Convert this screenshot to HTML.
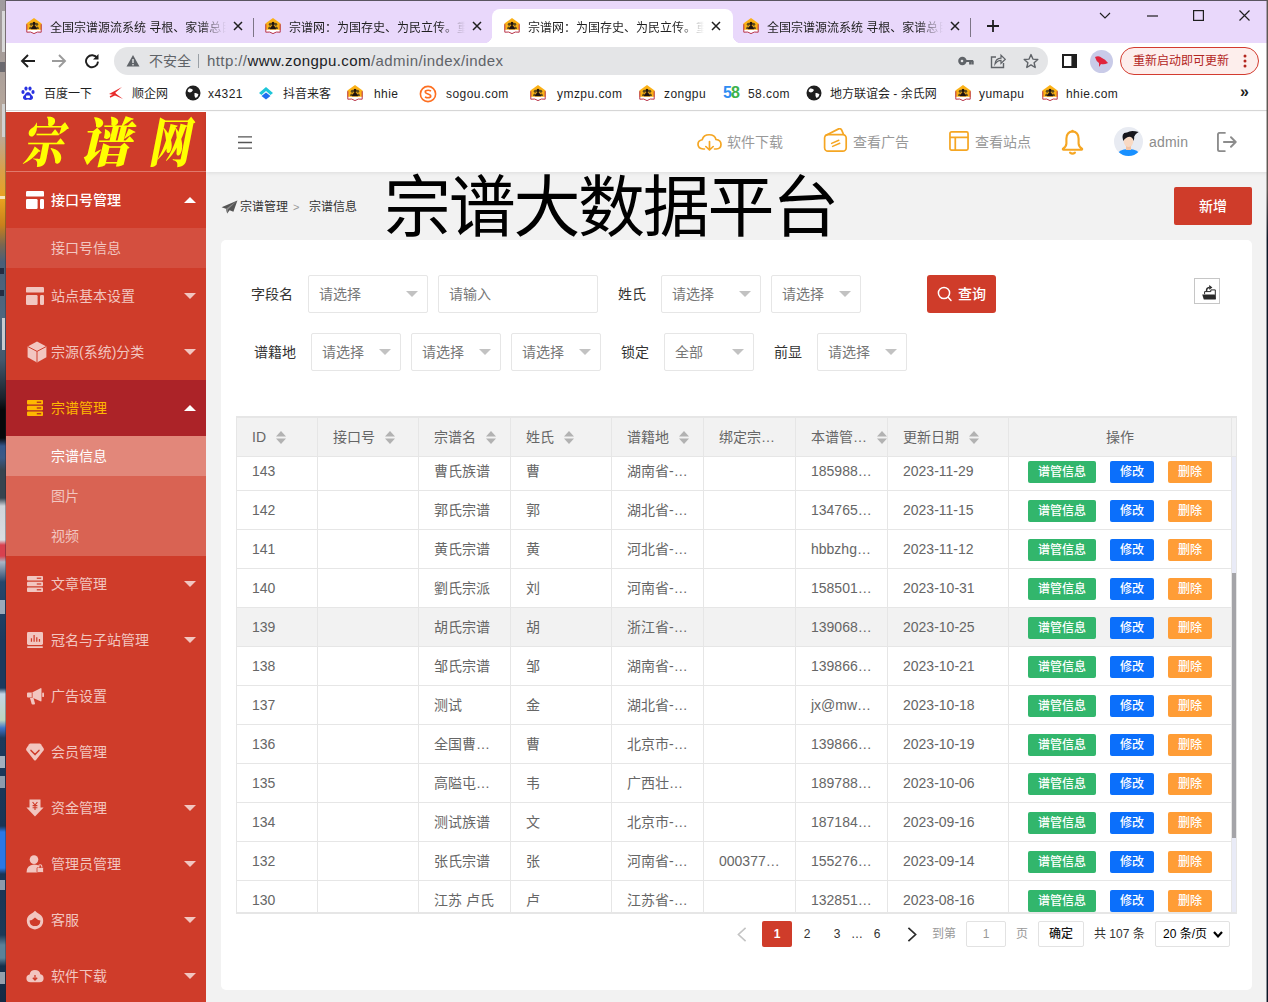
<!DOCTYPE html>
<html lang="zh-CN">
<head>
<meta charset="utf-8">
<title>宗谱网：为国存史、为民立传。</title>
<style>
*{box-sizing:border-box;margin:0;padding:0}
html,body{width:1268px;height:1002px;overflow:hidden;background:#fff}
body{position:relative;font-family:"Liberation Sans","Noto Sans CJK SC",sans-serif;font-size:14px;color:#666;-webkit-font-smoothing:antialiased}
.abs{position:absolute}
svg{display:block}
/* desktop strip */
#desk{position:absolute;left:0;top:0;width:6px;height:1002px;overflow:hidden;background:linear-gradient(180deg,#9f9b9e 0,#a59c99 50px,#b3a59b 100px,#bfa78f 140px,#d9a04a 170px,#e8a11f 200px,#c9801c 225px,#7a6650 245px,#4a5f78 262px,#50687f 320px,#44586c 360px,#1a222c 398px,#06080a 410px,#06080a 438px,#34568a 446px,#3a5a86 458px,#37444f 470px,#37444f 498px,#cfd4d9 506px,#d9dde2 540px,#d8404e 545px,#d8404e 556px,#aab6c4 562px,#27476c 582px,#1b3a5e 640px,#1b3a5e 688px,#c4d6e6 694px,#bcd6c0 720px,#3f74c8 728px,#1c3a5c 738px,#1a3556 826px,#2b78e6 832px,#2b78e6 868px,#1a3556 874px,#1d3a58 935px,#5b8298 945px,#5b8298 958px,#16304c 966px,#142a44 1002px)}
#desk i{position:absolute;display:block}
/* chrome */
#tabbar{z-index:2;position:absolute;left:6px;top:0;width:1262px;height:43px;background:#e9d8fb;border-top:1px solid #5a5560}
.tab{position:absolute;top:9px;height:34px;font-size:12px;color:#1f1f1f;white-space:nowrap}
.tab .ttl{position:absolute;top:10px;left:24px;width:178px;overflow:hidden;line-height:16px;height:16px;-webkit-mask-image:linear-gradient(90deg,#000 150px,transparent 176px);mask-image:linear-gradient(90deg,#000 150px,transparent 176px)}
.tab .fav{position:absolute;left:0;top:8px}
.tab .x{position:absolute;left:207px;top:11px}
.tsep{position:absolute;top:17px;width:1px;height:19px;background:#7d7586}
#tabact{position:absolute;left:486px;top:8px;width:241px;height:34px;background:#fff;border-radius:8px 8px 0 0}
#addr{position:absolute;left:6px;top:42px;width:1262px;height:36px;background:#fff}
#pill{position:absolute;left:108px;top:5px;width:934px;height:28px;border-radius:14px;background:#e4e5e7}
#bm{position:absolute;left:6px;top:78px;width:1262px;height:33px;background:#fff;border-bottom:1px solid #d8d8d8;font-size:12px;color:#1f1f1f}
#bm .b{position:absolute;top:8px;letter-spacing:.45px;line-height:16px;white-space:nowrap}
#bm .i{position:absolute;top:7px}
#bm .c{letter-spacing:0}
#tabact:before,#tabact:after{content:"";position:absolute;bottom:0;width:8px;height:8px;background:radial-gradient(circle at 0 0,transparent 8px,#fff 8.5px)}
#tabact:before{left:-8px}
#tabact:after{right:-8px;background:radial-gradient(circle at 100% 0,transparent 8px,#fff 8.5px)}
/* sidebar */
#side{position:absolute;left:6px;top:112px;width:200px;height:890px;background:#cf3c2a;overflow:hidden}
#logo{position:absolute;left:0;top:0;width:200px;height:60px;border-bottom:1px solid #e0796c;color:#ff0;font-family:"Liberation Serif","Noto Serif CJK SC",serif;font-weight:900;font-size:53px;line-height:56px;white-space:nowrap;font-style:italic}
#logo span{position:absolute;top:4px;display:block;transform-origin:0 50%}
.mi{position:absolute;left:0;width:200px;height:56px;color:#f2c6c0;font-size:14px;line-height:56px}
.mi .t{position:absolute;left:45px;top:0;white-space:nowrap}
.mi .ic{position:absolute;left:20px;top:19px}
.mi .ar{position:absolute;left:178px;top:25px;width:0;height:0;border:6px solid transparent;border-top-color:#f2c6c0;border-bottom-width:0}
.mi.open .ar{border-top-width:0;border-bottom:6px solid #fff;border-top-color:transparent}
.mi.open{color:#fff}
.mi.cur{background:#ac2328;color:#ffb800}
.sub{position:absolute;left:0;width:200px;height:40px;line-height:40px;color:#f2c6c0;font-size:14px;padding-left:45px;white-space:nowrap}
/* header */
#hdr{z-index:3;box-shadow:0 1px 4px rgba(0,0,0,.09);position:absolute;left:206px;top:112px;width:1062px;height:60px;background:#fff}
#hdr .ht{position:absolute;top:21px;font-size:14px;line-height:18px;color:#999;white-space:nowrap}
#main{position:absolute;left:206px;top:172px;width:1062px;height:830px;background:#f2f2f2}
/* main */
#main .bc{position:absolute;top:27px;font-size:12px;line-height:16px;color:#333;white-space:nowrap}
#bigt{position:absolute;left:178px;top:-12px;font-size:67px;line-height:96px;color:#000;white-space:nowrap;letter-spacing:-2.3px}
#add{font-weight:500;position:absolute;left:968px;top:15px;width:78px;height:38px;background:#cf3c2a;color:#fff;font-size:14px;line-height:38px;text-align:center;border-radius:2px}
#card{position:absolute;left:15px;top:68px;width:1031px;height:750px;background:#fff;border-radius:5px}
.lb{position:absolute;font-size:14px;line-height:38px;color:#333;white-space:nowrap}
.sel,.inp{position:absolute;height:38px;border:1px solid #e6e6e6;border-radius:2px;background:#fff;font-size:14px;line-height:36px;color:#777;padding-left:10px;white-space:nowrap}
.sel i{position:absolute;right:9px;top:15px;width:0;height:0;border:6px solid transparent;border-top-color:#c2c2c2;border-bottom-width:0}
#qry{font-weight:500;position:absolute;left:706px;top:35px;width:69px;height:38px;background:#cf3c2a;border-radius:3px;color:#fff;font-size:14px;line-height:38px}
#exp{position:absolute;left:973px;top:38px;width:26px;height:26px;border:1px solid #c6c6c6;background:#fff}
/* table */
#tbl{position:absolute;left:15px;top:176px;width:1001px;height:498px;border:1px solid #e6e6e6;border-top-width:2px;border-bottom-width:2px;overflow:hidden;background:#fff}
#thd{position:absolute;left:0;top:0;width:999px;height:39px;background:#f2f2f2;border-bottom:1px solid #e6e6e6;z-index:2}
.th{position:absolute;top:0;height:39px;line-height:39px;font-size:14px;color:#666;padding-left:15px;white-space:nowrap;border-right:1px solid #e6e6e6}
.th .so{position:absolute;top:13px}
.tr{position:absolute;left:0;width:995px;height:39px;border-bottom:1px solid #e6e6e6}
.td{position:absolute;top:0;height:38px;line-height:38px;font-size:14px;color:#666;padding-left:15px;white-space:nowrap;overflow:hidden;border-right:1px solid #e6e6e6}
.bt{position:absolute;top:9px;height:22px;line-height:22px;font-size:12px;font-weight:500;color:#fff;text-align:center;border-radius:2px}
.g{background:#32b66c}.bl{background:#0b6ffb}.o{background:#ff9d36}
#sb{position:absolute;left:995px;top:39px;width:4px;height:456px;background:#e9ebf7}
#sbt{position:absolute;left:995px;top:155px;width:4px;height:265px;background:#a4a4a8}
/* pager */
.pg{position:absolute;top:681px;height:26px;line-height:26px;font-size:12px;color:#333;white-space:nowrap}
.pgb{border:1px solid #e2e2e2;border-radius:2px;background:#fff}
</style>
</head>
<body>
<div id="desk"><i style="left:2px;top:11px;width:3px;height:41px;background:#d9d9d9"></i><i style="left:2px;top:104px;width:3px;height:33px;background:#d2d2d2"></i><i style="left:5px;top:0;width:1px;height:1002px;background:rgba(40,30,40,.35)"></i><i style="left:0;top:62px;width:5px;height:10px;background:rgba(30,40,60,.45)"></i><i style="left:0;top:196px;width:5px;height:3px;background:rgba(255,255,255,.7)"></i><i style="left:0;top:268px;width:4px;height:6px;background:rgba(10,10,30,.6)"></i><i style="left:0;top:290px;width:4px;height:6px;background:rgba(10,10,30,.6)"></i><i style="left:2px;top:318px;width:3px;height:32px;background:#c9ccd0"></i><i style="left:0;top:600px;width:5px;height:14px;background:rgba(255,255,255,.55)"></i><i style="left:0;top:756px;width:5px;height:12px;background:rgba(255,255,255,.6)"></i><i style="left:0;top:776px;width:5px;height:12px;background:rgba(255,255,255,.5)"></i><i style="left:0;top:880px;width:5px;height:10px;background:rgba(255,255,255,.5)"></i><i style="left:0;top:972px;width:5px;height:12px;background:rgba(255,255,255,.55)"></i></div>
<div id="tabbar">
<div id="tabact"></div>
<div class="tab" style="left:20px;width:230px"><span class="fav"><svg width="16" height="16" viewBox="0 0 16 16"><path d="M8 0L15.6 5.6V12H.4V5.6Z" fill="#fbb116"/><path d="M.9 11.7H15.1V14Q11 13 8 15.3Q5 13 .9 14Z" fill="#fff"/><path d="M.8 6.2V14.2Q5 13.2 8 15.6Q11 13.2 15.2 14.2V6.2" fill="none" stroke="#b9364a" stroke-width="1"/><circle cx="5.3" cy="6.3" r="1.5" fill="#5c4c1c"/><circle cx="10.7" cy="6.3" r="1.5" fill="#5c4c1c"/><path d="M3 11Q3.2 8.6 5 8.6L6 11ZM13 11Q12.8 8.6 11 8.6L10 11Z" fill="#5c4c1c"/><circle cx="8" cy="5.3" r="1.5" fill="#1c1210"/><path d="M4.9 11.2Q5.2 8.4 7.2 7.8V6H8.8V7.8Q10.8 8.4 11.1 11.2Z" fill="#1c1210"/></svg></span><span class="ttl">全国宗谱源流系统 寻根、家谱总目</span><span class="x"><svg width="10" height="10" viewBox="0 0 10 10"><path d="M1 1L9 9M9 1L1 9" stroke="#1f1f1f" stroke-width="1.5" fill="none"/></svg></span></div>
<div class="tsep" style="left:247px"></div>
<div class="tab" style="left:259px;width:230px"><span class="fav"><svg width="16" height="16" viewBox="0 0 16 16"><path d="M8 0L15.6 5.6V12H.4V5.6Z" fill="#fbb116"/><path d="M.9 11.7H15.1V14Q11 13 8 15.3Q5 13 .9 14Z" fill="#fff"/><path d="M.8 6.2V14.2Q5 13.2 8 15.6Q11 13.2 15.2 14.2V6.2" fill="none" stroke="#b9364a" stroke-width="1"/><circle cx="5.3" cy="6.3" r="1.5" fill="#5c4c1c"/><circle cx="10.7" cy="6.3" r="1.5" fill="#5c4c1c"/><path d="M3 11Q3.2 8.6 5 8.6L6 11ZM13 11Q12.8 8.6 11 8.6L10 11Z" fill="#5c4c1c"/><circle cx="8" cy="5.3" r="1.5" fill="#1c1210"/><path d="M4.9 11.2Q5.2 8.4 7.2 7.8V6H8.8V7.8Q10.8 8.4 11.1 11.2Z" fill="#1c1210"/></svg></span><span class="ttl">宗谱网：为国存史、为民立传。重</span><span class="x"><svg width="10" height="10" viewBox="0 0 10 10"><path d="M1 1L9 9M9 1L1 9" stroke="#1f1f1f" stroke-width="1.5" fill="none"/></svg></span></div>
<div class="tab" style="left:498px;width:230px"><span class="fav"><svg width="16" height="16" viewBox="0 0 16 16"><path d="M8 0L15.6 5.6V12H.4V5.6Z" fill="#fbb116"/><path d="M.9 11.7H15.1V14Q11 13 8 15.3Q5 13 .9 14Z" fill="#fff"/><path d="M.8 6.2V14.2Q5 13.2 8 15.6Q11 13.2 15.2 14.2V6.2" fill="none" stroke="#b9364a" stroke-width="1"/><circle cx="5.3" cy="6.3" r="1.5" fill="#5c4c1c"/><circle cx="10.7" cy="6.3" r="1.5" fill="#5c4c1c"/><path d="M3 11Q3.2 8.6 5 8.6L6 11ZM13 11Q12.8 8.6 11 8.6L10 11Z" fill="#5c4c1c"/><circle cx="8" cy="5.3" r="1.5" fill="#1c1210"/><path d="M4.9 11.2Q5.2 8.4 7.2 7.8V6H8.8V7.8Q10.8 8.4 11.1 11.2Z" fill="#1c1210"/></svg></span><span class="ttl">宗谱网：为国存史、为民立传。重</span><span class="x"><svg width="10" height="10" viewBox="0 0 10 10"><path d="M1 1L9 9M9 1L1 9" stroke="#1f1f1f" stroke-width="1.5" fill="none"/></svg></span></div>
<div class="tab" style="left:737px;width:230px"><span class="fav"><svg width="16" height="16" viewBox="0 0 16 16"><path d="M8 0L15.6 5.6V12H.4V5.6Z" fill="#fbb116"/><path d="M.9 11.7H15.1V14Q11 13 8 15.3Q5 13 .9 14Z" fill="#fff"/><path d="M.8 6.2V14.2Q5 13.2 8 15.6Q11 13.2 15.2 14.2V6.2" fill="none" stroke="#b9364a" stroke-width="1"/><circle cx="5.3" cy="6.3" r="1.5" fill="#5c4c1c"/><circle cx="10.7" cy="6.3" r="1.5" fill="#5c4c1c"/><path d="M3 11Q3.2 8.6 5 8.6L6 11ZM13 11Q12.8 8.6 11 8.6L10 11Z" fill="#5c4c1c"/><circle cx="8" cy="5.3" r="1.5" fill="#1c1210"/><path d="M4.9 11.2Q5.2 8.4 7.2 7.8V6H8.8V7.8Q10.8 8.4 11.1 11.2Z" fill="#1c1210"/></svg></span><span class="ttl">全国宗谱源流系统 寻根、家谱总目</span><span class="x"><svg width="10" height="10" viewBox="0 0 10 10"><path d="M1 1L9 9M9 1L1 9" stroke="#1f1f1f" stroke-width="1.5" fill="none"/></svg></span></div>
<div class="tsep" style="left:964px"></div>
<svg class="abs" style="left:980px;top:18px" width="14" height="14" viewBox="0 0 14 14"><path d="M7 1V13M1 7H13" stroke="#1f1f1f" stroke-width="1.8" fill="none"/></svg>
<svg class="abs" style="left:1093px;top:11px" width="12" height="8" viewBox="0 0 12 8"><path d="M1 1L6 6L11 1" stroke="#1f1f1f" stroke-width="1.1" fill="none"/></svg>
<svg class="abs" style="left:1141px;top:14px" width="11" height="2" viewBox="0 0 11 2"><path d="M0 1H11" stroke="#1f1f1f" stroke-width="1.2"/></svg>
<svg class="abs" style="left:1187px;top:9px" width="11" height="11" viewBox="0 0 11 11"><rect x=".6" y=".6" width="9.8" height="9.8" stroke="#1f1f1f" stroke-width="1.2" fill="none"/></svg>
<svg class="abs" style="left:1233px;top:9px" width="11" height="11" viewBox="0 0 11 11"><path d="M.5 .5L10.5 10.5M10.5 .5L.5 10.5" stroke="#1f1f1f" stroke-width="1.2" fill="none"/></svg>
</div>
<div id="addr">
<svg class="abs" style="left:14px;top:11px" width="16" height="16" viewBox="0 0 16 16"><path d="M15 8H2.5M8 2L2 8L8 14" stroke="#1f1f1f" stroke-width="1.9" fill="none"/></svg>
<svg class="abs" style="left:45px;top:11px" width="16" height="16" viewBox="0 0 16 16"><path d="M1 8H13.5M8 2L14 8L8 14" stroke="#9b9b9b" stroke-width="1.9" fill="none"/></svg>
<svg class="abs" style="left:78px;top:11px" width="16" height="16" viewBox="0 0 16 16"><path d="M13.2 5.2A6 6 0 1 0 14 8.6" stroke="#1f1f1f" stroke-width="1.9" fill="none"/><path d="M14.5 1V6.5H9Z" fill="#1f1f1f"/></svg>
<div id="pill">
<svg class="abs" style="left:12px;top:7px" width="14" height="14" viewBox="0 0 14 14"><path d="M7 1L13.5 12.5H.5Z" fill="#5f6368"/><rect x="6.3" y="5" width="1.4" height="4" fill="#e4e5e7"/><rect x="6.3" y="10" width="1.4" height="1.4" fill="#e4e5e7"/></svg>
<span class="abs" style="left:35px;top:5px;font-size:14px;line-height:18px;color:#5f6368;white-space:nowrap">不安全</span>
<span class="abs" style="left:84px;top:7px;width:1px;height:14px;background:#9aa0a6"></span>
<span class="abs" style="left:93px;top:5px;font-size:15px;line-height:18px;color:#5f6368;white-space:nowrap;letter-spacing:.42px">http://<span style="color:#202124">www.zongpu.com</span>/admin/index/index</span>
<svg class="abs" style="left:844px;top:8px" width="16" height="12" viewBox="0 0 16 12"><circle cx="4.4" cy="6" r="4.2" fill="#5f6368"/><circle cx="4" cy="6" r="1.3" fill="#e4e5e7"/><path d="M8 6H15.2M12.2 6V9.6M14.6 6V9.6" stroke="#5f6368" stroke-width="2.2" fill="none"/></svg>
<svg class="abs" style="left:876px;top:6px" width="16" height="16" viewBox="0 0 16 16"><path d="M6 4H1.5V14.5H13.5V10" stroke="#5f6368" stroke-width="1.4" fill="none"/><path d="M5 11Q5.5 5.5 11 5.2V2.2L15.3 6.3L11 10.4V7.4Q7.5 7.4 5 11Z" stroke="#5f6368" stroke-width="1.2" fill="none"/></svg>
<svg class="abs" style="left:909px;top:6px" width="16" height="16" viewBox="0 0 16 16"><path d="M8 1.6L9.9 6.1L14.8 6.5L11.1 9.7L12.2 14.5L8 11.9L3.8 14.5L4.9 9.7L1.2 6.5L6.1 6.1Z" stroke="#5f6368" stroke-width="1.4" fill="none" stroke-linejoin="round"/></svg>
</div>
<svg class="abs" style="left:1056px;top:12px" width="15" height="14" viewBox="0 0 15 14"><rect x="1" y="1" width="13" height="12" stroke="#1f1f1f" stroke-width="2" fill="none"/><rect x="9.4" y="1" width="4.6" height="12" fill="#1f1f1f"/></svg>
<div class="abs" style="left:1084px;top:8px;width:23px;height:23px;border-radius:50%;background:#c9cbe8"></div>
<svg class="abs" style="left:1088px;top:13px" width="15" height="13" viewBox="0 0 15 13"><path d="M1 2Q5 0 8 3Q11 4 14 8Q10 10 7 9L5 12L5 8Q2 6 1 2Z" fill="#e0243c"/></svg>
<div class="abs" style="left:1114px;top:5px;width:139px;height:28px;border-radius:14px;background:#fdeeec;border:1px solid #d33b2f"></div>
<span class="abs" style="left:1127px;top:10px;font-size:12px;line-height:18px;color:#b3261e;white-space:nowrap">重新启动即可更新</span>
<svg class="abs" style="left:1237px;top:12px" width="4" height="14" viewBox="0 0 4 14"><circle cx="2" cy="2" r="1.5" fill="#b3261e"/><circle cx="2" cy="7" r="1.5" fill="#b3261e"/><circle cx="2" cy="12" r="1.5" fill="#b3261e"/></svg>
</div>
<div id="bm">
<span class="i" style="left:14px"><svg width="16" height="16" viewBox="0 0 16 16"><ellipse cx="3" cy="7" rx="1.6" ry="2.1" fill="#2932e1"/><ellipse cx="6" cy="3.6" rx="1.6" ry="2.1" fill="#2932e1"/><ellipse cx="10" cy="3.6" rx="1.6" ry="2.1" fill="#2932e1"/><ellipse cx="13" cy="7" rx="1.6" ry="2.1" fill="#2932e1"/><path d="M8 7Q10 7 11.5 10Q14 12 12.5 14Q11 15.5 8 14.5Q5 15.5 3.5 14Q2 12 4.5 10Q6 7 8 7Z" fill="#2932e1"/><rect x="6" y="10.5" width="4" height="2.6" rx=".8" fill="#fff"/></svg></span><span class="b c" style="left:38px">百度一下</span>
<span class="i" style="left:102px"><svg width="16" height="16" viewBox="0 0 16 16"><path d="M1 9L14 2L7 8L15 14L6 10Z" fill="#e82a2a"/><path d="M2 12L8 9" stroke="#e82a2a" stroke-width="1.4"/></svg></span><span class="b c" style="left:126px">顺企网</span>
<span class="i" style="left:179px"><svg width="16" height="16" viewBox="0 0 16 16"><circle cx="8" cy="8" r="7.5" fill="#1f1f1f"/><path d="M4 3.5Q7 3 8 5Q7 7 5 7.5Q3 7 2.5 6Q3 4.5 4 3.5ZM9.5 8Q12 7.5 13.5 9.5Q13 12 10.5 13Q9 11 9.5 8Z" fill="#fff"/></svg></span><span class="b" style="left:202px">x4321</span>
<span class="i" style="left:252px"><svg width="16" height="16" viewBox="0 0 16 16"><path d="M1 8L8 2L15 8L12.5 10L8 6L3.5 10Z" fill="#1ec6d9"/><path d="M3.5 11L8 7.5L12.5 11L8 14.5Z" fill="#1f6ff0"/></svg></span><span class="b c" style="left:277px">抖音来客</span>
<span class="i" style="left:341px"><svg width="16" height="16" viewBox="0 0 16 16"><path d="M8 0L15.6 5.6V12H.4V5.6Z" fill="#fbb116"/><path d="M.9 11.7H15.1V14Q11 13 8 15.3Q5 13 .9 14Z" fill="#fff"/><path d="M.8 6.2V14.2Q5 13.2 8 15.6Q11 13.2 15.2 14.2V6.2" fill="none" stroke="#b9364a" stroke-width="1"/><circle cx="5.3" cy="6.3" r="1.5" fill="#5c4c1c"/><circle cx="10.7" cy="6.3" r="1.5" fill="#5c4c1c"/><path d="M3 11Q3.2 8.6 5 8.6L6 11ZM13 11Q12.8 8.6 11 8.6L10 11Z" fill="#5c4c1c"/><circle cx="8" cy="5.3" r="1.5" fill="#1c1210"/><path d="M4.9 11.2Q5.2 8.4 7.2 7.8V6H8.8V7.8Q10.8 8.4 11.1 11.2Z" fill="#1c1210"/></svg></span><span class="b" style="left:368px">hhie</span>
<span class="i" style="left:413px"><svg width="18" height="18" viewBox="0 0 18 18"><circle cx="9" cy="9" r="7.6" fill="#fff" stroke="#fd6f21" stroke-width="1.6"/><path d="M12 6Q9 4.5 6.5 6Q5.5 8 9 9Q12.5 10 11.5 12Q9 13.5 6 12" stroke="#fd6f21" stroke-width="1.7" fill="none"/></svg></span><span class="b" style="left:440px">sogou.com</span>
<span class="i" style="left:524px"><svg width="16" height="16" viewBox="0 0 16 16"><path d="M8 0L15.6 5.6V12H.4V5.6Z" fill="#fbb116"/><path d="M.9 11.7H15.1V14Q11 13 8 15.3Q5 13 .9 14Z" fill="#fff"/><path d="M.8 6.2V14.2Q5 13.2 8 15.6Q11 13.2 15.2 14.2V6.2" fill="none" stroke="#b9364a" stroke-width="1"/><circle cx="5.3" cy="6.3" r="1.5" fill="#5c4c1c"/><circle cx="10.7" cy="6.3" r="1.5" fill="#5c4c1c"/><path d="M3 11Q3.2 8.6 5 8.6L6 11ZM13 11Q12.8 8.6 11 8.6L10 11Z" fill="#5c4c1c"/><circle cx="8" cy="5.3" r="1.5" fill="#1c1210"/><path d="M4.9 11.2Q5.2 8.4 7.2 7.8V6H8.8V7.8Q10.8 8.4 11.1 11.2Z" fill="#1c1210"/></svg></span><span class="b" style="left:551px">ymzpu.com</span>
<span class="i" style="left:633px"><svg width="16" height="16" viewBox="0 0 16 16"><path d="M8 0L15.6 5.6V12H.4V5.6Z" fill="#fbb116"/><path d="M.9 11.7H15.1V14Q11 13 8 15.3Q5 13 .9 14Z" fill="#fff"/><path d="M.8 6.2V14.2Q5 13.2 8 15.6Q11 13.2 15.2 14.2V6.2" fill="none" stroke="#b9364a" stroke-width="1"/><circle cx="5.3" cy="6.3" r="1.5" fill="#5c4c1c"/><circle cx="10.7" cy="6.3" r="1.5" fill="#5c4c1c"/><path d="M3 11Q3.2 8.6 5 8.6L6 11ZM13 11Q12.8 8.6 11 8.6L10 11Z" fill="#5c4c1c"/><circle cx="8" cy="5.3" r="1.5" fill="#1c1210"/><path d="M4.9 11.2Q5.2 8.4 7.2 7.8V6H8.8V7.8Q10.8 8.4 11.1 11.2Z" fill="#1c1210"/></svg></span><span class="b" style="left:658px">zongpu</span>
<span class="i" style="left:717px"><span style="font-weight:bold;font-size:16px;letter-spacing:-1px;line-height:16px"><span style="color:#2f8df2">5</span><span style="color:#3cb34a">8</span></span></span><span class="b" style="left:742px">58.com</span>
<span class="i" style="left:800px"><svg width="16" height="16" viewBox="0 0 16 16"><circle cx="8" cy="8" r="7.5" fill="#1f1f1f"/><path d="M4 3.5Q7 3 8 5Q7 7 5 7.5Q3 7 2.5 6Q3 4.5 4 3.5ZM9.5 8Q12 7.5 13.5 9.5Q13 12 10.5 13Q9 11 9.5 8Z" fill="#fff"/></svg></span><span class="b c" style="left:824px">地方联谊会 - 余氏网</span>
<span class="i" style="left:949px"><svg width="16" height="16" viewBox="0 0 16 16"><path d="M8 0L15.6 5.6V12H.4V5.6Z" fill="#fbb116"/><path d="M.9 11.7H15.1V14Q11 13 8 15.3Q5 13 .9 14Z" fill="#fff"/><path d="M.8 6.2V14.2Q5 13.2 8 15.6Q11 13.2 15.2 14.2V6.2" fill="none" stroke="#b9364a" stroke-width="1"/><circle cx="5.3" cy="6.3" r="1.5" fill="#5c4c1c"/><circle cx="10.7" cy="6.3" r="1.5" fill="#5c4c1c"/><path d="M3 11Q3.2 8.6 5 8.6L6 11ZM13 11Q12.8 8.6 11 8.6L10 11Z" fill="#5c4c1c"/><circle cx="8" cy="5.3" r="1.5" fill="#1c1210"/><path d="M4.9 11.2Q5.2 8.4 7.2 7.8V6H8.8V7.8Q10.8 8.4 11.1 11.2Z" fill="#1c1210"/></svg></span><span class="b" style="left:973px">yumapu</span>
<span class="i" style="left:1036px"><svg width="16" height="16" viewBox="0 0 16 16"><path d="M8 0L15.6 5.6V12H.4V5.6Z" fill="#fbb116"/><path d="M.9 11.7H15.1V14Q11 13 8 15.3Q5 13 .9 14Z" fill="#fff"/><path d="M.8 6.2V14.2Q5 13.2 8 15.6Q11 13.2 15.2 14.2V6.2" fill="none" stroke="#b9364a" stroke-width="1"/><circle cx="5.3" cy="6.3" r="1.5" fill="#5c4c1c"/><circle cx="10.7" cy="6.3" r="1.5" fill="#5c4c1c"/><path d="M3 11Q3.2 8.6 5 8.6L6 11ZM13 11Q12.8 8.6 11 8.6L10 11Z" fill="#5c4c1c"/><circle cx="8" cy="5.3" r="1.5" fill="#1c1210"/><path d="M4.9 11.2Q5.2 8.4 7.2 7.8V6H8.8V7.8Q10.8 8.4 11.1 11.2Z" fill="#1c1210"/></svg></span><span class="b" style="left:1060px">hhie.com</span>
<span class="b" style="left:1234px;font-size:16px;top:6px;font-weight:bold;letter-spacing:0">»</span>
</div>
<div id="side">
<div id="logo"><span style="left:16px;transform:scaleX(.78)">宗</span><span style="left:73px;transform:scaleX(.97)">谱</span><span style="left:142px;transform:scaleX(.78)">网</span></div>
<div class="mi open" style="top:60px"><span class="ic"><svg width="18" height="18" viewBox="0 0 18 18"><rect x="0" y="0" width="18" height="5.6" rx="1.2" fill="#fff"/><rect x="0" y="8" width="11.6" height="10" rx="1.2" fill="#fff"/><rect x="14" y="8" width="4" height="10" rx="1.2" fill="#fff"/></svg></span><span class="t"><span style="font-weight:500">接口号管理</span></span><span class="ar"></span></div>
<div class="sub" style="top:116px;background:#d44f3f;color:#f2c6c0">接口号信息</div>
<div class="mi " style="top:156px"><span class="ic"><svg width="18" height="18" viewBox="0 0 18 18"><rect x="0" y="0" width="18" height="5.6" rx="1.2" fill="#f2c6c0"/><rect x="0" y="8" width="11.6" height="10" rx="1.2" fill="#f2c6c0"/><rect x="14" y="8" width="4" height="10" rx="1.2" fill="#f2c6c0"/></svg></span><span class="t">站点基本设置</span><span class="ar"></span></div>
<div class="mi " style="top:212px"><span class="ic"><svg width="20" height="22" viewBox="0 0 20 22" style="margin:-2px 0 0 1px"><path d="M10 .6L19.4 5.4V16.2L10 21.4L.6 16.2V5.4Z" fill="#f2c6c0"/><path d="M.9 5.6L10 10.4L19.1 5.6M10 10.4V21" stroke="#cf3c2a" stroke-width="1" fill="none"/></svg></span><span class="t">宗源(系统)分类</span><span class="ar"></span></div>
<div class="mi open cur" style="top:268px"><span class="ic"><svg width="16" height="16" viewBox="0 0 18 18" style="margin:1px 0 0 1px"><rect x="0" y="0" width="18" height="5" rx="1" fill="#ffb800"/><rect x="0" y="6.5" width="18" height="5" rx="1" fill="#ffb800"/><rect x="0" y="13" width="18" height="5" rx="1" fill="#ffb800"/><rect x="11" y="1.8" width="5" height="1.4" fill="#ac2328"/><rect x="11" y="8.3" width="5" height="1.4" fill="#ac2328"/><rect x="11" y="14.8" width="5" height="1.4" fill="#ac2328"/></svg></span><span class="t">宗谱管理</span><span class="ar"></span></div>
<div class="sub" style="top:324px;background:#e2877a;color:#fff">宗谱信息</div>
<div class="sub" style="top:364px;background:#d96353;color:#f2c6c0">图片</div>
<div class="sub" style="top:404px;background:#d96353;color:#f2c6c0">视频</div>
<div class="mi " style="top:444px"><span class="ic"><svg width="16" height="16" viewBox="0 0 18 18" style="margin:1px 0 0 1px"><rect x="0" y="0" width="18" height="5" rx="1" fill="#f2c6c0"/><rect x="0" y="6.5" width="18" height="5" rx="1" fill="#f2c6c0"/><rect x="0" y="13" width="18" height="5" rx="1" fill="#f2c6c0"/><rect x="11" y="1.8" width="5" height="1.4" fill="#cf3c2a"/><rect x="11" y="8.3" width="5" height="1.4" fill="#cf3c2a"/><rect x="11" y="14.8" width="5" height="1.4" fill="#cf3c2a"/></svg></span><span class="t">文章管理</span><span class="ar"></span></div>
<div class="mi " style="top:500px"><span class="ic"><svg width="16" height="16" viewBox="0 0 18 18" style="margin:1px 0 0 1px"><rect x="0" y="0" width="18" height="14.5" rx="1.5" fill="#f2c6c0"/><rect x="0" y="16" width="18" height="2" rx="1" fill="#f2c6c0"/><path d="M5 11V7M8 11V3.5M11 11V6M14 11V8" stroke="#cf3c2a" stroke-width="1.4"/></svg></span><span class="t">冠名与子站管理</span><span class="ar"></span></div>
<div class="mi " style="top:556px"><span class="ic"><svg width="18" height="18" viewBox="0 0 18 18"><path d="M1 6.5Q1 5.5 2 5.5L6 5.5L14.5 1.2Q15.5 .8 15.5 2V13.5Q15.5 14.7 14.5 14.3L6 10.5H2Q1 10.5 1 9.5Z" fill="#f2c6c0"/><path d="M4 11H7.5L9 16.5Q9 17.5 8 17.5H6.5Q5.8 17.5 5.6 16.8Z" fill="#f2c6c0"/><path d="M6.2 5.5V10.5" stroke="#cf3c2a" stroke-width=".8"/><rect x="16.2" y="5.5" width="1.8" height="4.6" rx=".9" fill="#f2c6c0"/></svg></span><span class="t">广告设置</span></div>
<div class="mi " style="top:612px"><span class="ic"><svg width="18" height="18" viewBox="0 0 18 18"><path d="M4.4 .6H13.6Q14.4 .6 14.9 1.3L17.7 5.6Q18.2 6.5 17.5 7.4L9.8 17.2Q9 18 8.2 17.2L.5 7.4Q-.2 6.5.3 5.6L3.1 1.3Q3.6 .6 4.4 .6Z" fill="#f2c6c0"/><path d="M5 7.4L9 11.6L13 7.4" stroke="#cf3c2a" stroke-width="1.5" fill="none" stroke-linecap="round" stroke-linejoin="round"/></svg></span><span class="t">会员管理</span></div>
<div class="mi " style="top:668px"><span class="ic"><svg width="18" height="18" viewBox="0 0 18 18"><path d="M3.5 .5H14.5V8.5H17.6L9 17.5L.4 8.5H3.5Z" fill="#f2c6c0"/><path d="M6.6 3L9 6L11.4 3M9 6V11M6.6 6.6H11.4M6.6 8.8H11.4" stroke="#cf3c2a" stroke-width="1.1" fill="none"/></svg></span><span class="t">资金管理</span><span class="ar"></span></div>
<div class="mi " style="top:724px"><span class="ic"><svg width="18" height="18" viewBox="0 0 18 18"><circle cx="8" cy="4.6" r="4.3" fill="#f2c6c0"/><path d="M.5 17.5Q.5 10 8 9.6Q12 9.6 13.5 11.5V17.5Z" fill="#f2c6c0"/><rect x="11" y="12.5" width="6.5" height="5" rx=".8" fill="#f2c6c0" stroke="#cf3c2a" stroke-width=".8"/><path d="M12.6 12.5V11.3Q12.6 9.8 14.2 9.8Q15.8 9.8 15.8 11.3V12.5" stroke="#f2c6c0" stroke-width="1.1" fill="none"/></svg></span><span class="t">管理员管理</span><span class="ar"></span></div>
<div class="mi " style="top:780px"><span class="ic"><svg width="18" height="20" viewBox="0 0 18 20" style="margin-top:-1px"><path d="M9 .8Q10.5 2.6 13.6 4.2Q17.2 6.6 17.2 10.8Q17.2 15 14 17.6Q11.6 19.4 9 19.4Q4.6 19.4 2 15.6Q.8 13.4.8 10.8Q.8 6.6 4.4 4.2Q7.5 2.6 9 .8Z" fill="#f2c6c0"/><path d="M3.6 10.6Q6.6 10.2 9 7.6Q11.4 10.2 14.4 10.6Q14.4 16 9 16.4Q3.6 16 3.6 10.6Z" fill="#cf3c2a"/><path d="M14.8 12Q14.8 16.8 10 17" stroke="#f2c6c0" stroke-width="1.1" fill="none"/><rect x="7.6" y="16" width="3.2" height="2" rx="1" fill="#f2c6c0"/></svg></span><span class="t">客服</span><span class="ar"></span></div>
<div class="mi " style="top:836px"><span class="ic"><svg width="18" height="18" viewBox="0 0 18 18"><path d="M4.6 15.2Q.4 15 .4 11.2Q.4 8 3.6 7.4Q4.4 3 9 3Q13.4 3 14.4 7.2Q17.6 7.8 17.6 11.2Q17.6 15 13.6 15.2Z" fill="#f2c6c0"/><path d="M9 8V12.6M6.8 10.8L9 13L11.2 10.8" stroke="#cf3c2a" stroke-width="1.3" fill="none"/></svg></span><span class="t">软件下载</span><span class="ar"></span></div>
</div>
<div id="hdr">
<svg class="abs" style="left:32px;top:24px" width="14" height="13" viewBox="0 0 14 13"><path d="M0 .8H14M0 6.5H14M0 12.2H14" stroke="#555" stroke-width="1.3"/></svg>
<svg class="abs" style="left:491px;top:21px" width="25" height="19" viewBox="0 0 25 21" preserveAspectRatio="none"><path d="M7.5 17.6H6.2Q1 17.2 1 12.4Q1 8.2 5.2 7.4Q6.6 2 12.2 2Q17.8 2 19 7.2Q24 7.8 24 12.6Q24 17.2 19.2 17.6H17.5" stroke="#f5a623" stroke-width="1.7" fill="none" stroke-linecap="round"/><path d="M12.5 9.5V18.5M8.8 15L12.5 18.7L16.2 15" stroke="#f5a623" stroke-width="1.7" fill="none" stroke-linecap="round" stroke-linejoin="round"/></svg>
<span class="ht" style="left:521px">软件下载</span>
<svg class="abs" style="left:617px;top:16px" width="25" height="25" viewBox="0 0 25 25"><path d="M2.6 7.6L15.6 .9Q17.6 .2 18.6 2L20.2 5.6" stroke="#f5a623" stroke-width="1.7" fill="none" stroke-linecap="round"/><rect x="1.6" y="6.6" width="21.6" height="16.6" rx="3.4" stroke="#f5a623" stroke-width="1.7" fill="none"/><path d="M8.6 15.4L15.8 12.2M9.6 18.4L16.8 15.2" stroke="#f5a623" stroke-width="1.5" stroke-linecap="round"/></svg>
<span class="ht" style="left:647px">查看广告</span>
<svg class="abs" style="left:743px;top:19px" width="20" height="20" viewBox="0 0 21 21"><rect x="1" y="1" width="19" height="19" rx="1.6" stroke="#f5a623" stroke-width="1.8" fill="none"/><path d="M1 6.6H20M6.6 6.6V20" stroke="#f5a623" stroke-width="1.8"/></svg>
<span class="ht" style="left:769px">查看站点</span>
<svg class="abs" style="left:855px;top:17px" width="23" height="27" viewBox="0 0 23 27"><path d="M11.5 2.4Q17.4 3 17.6 9.6V14.6Q17.8 17.8 21 19.6Q21.6 20.6 20.4 20.8H2.6Q1.4 20.6 2 19.6Q5.2 17.8 5.4 14.6V9.6Q5.6 3 11.5 2.4Z" stroke="#f5a623" stroke-width="2.1" fill="none" stroke-linejoin="round"/><circle cx="11.5" cy="1.9" r="1.2" fill="#f5a623"/><path d="M9 23.6Q11.5 25.6 14 23.6" stroke="#f5a623" stroke-width="2" fill="none" stroke-linecap="round"/></svg>
<div class="abs" style="left:908px;top:15px;width:29px;height:29px;border-radius:50%;overflow:hidden"><svg width="29" height="29" viewBox="0 0 29 29"><g><rect width="29" height="29" fill="#e8ebf2"/><path d="M2.5 31Q2.5 22 14.5 22Q26.5 22 26.5 31Z" fill="#1890ff"/><rect x="12" y="17.5" width="5" height="5.5" fill="#f2c4a6"/><ellipse cx="14.5" cy="14" rx="4.9" ry="6" fill="#f8d9c3"/><path d="M9.2 14Q6.6 5.2 13 5.4Q17 2.6 24.6 5Q21.4 6.6 20.2 9.4Q20.4 12 19.6 14Q18.6 10.4 16 9.8Q11.6 10 9.2 14Z" fill="#16161c"/></g></svg></div>
<span class="ht" style="left:943px;font-size:14px;letter-spacing:.2px;color:#8c8c8c">admin</span>
<svg class="abs" style="left:1011px;top:20px" width="20" height="20" viewBox="0 0 22 22"><path d="M8.6 1H3Q1 1 1 3V19Q1 21 3 21H8.6" stroke="#8c8c8c" stroke-width="2.1" fill="none" stroke-linecap="round"/><path d="M7.6 11H20.4M15.4 5.8L20.6 11L15.4 16.2" stroke="#8c8c8c" stroke-width="2.1" fill="none" stroke-linecap="round" stroke-linejoin="round"/></svg>
</div>
<div id="main">
<svg class="abs" style="left:15px;top:28px" width="17" height="14" viewBox="0 0 17 14"><path d="M16.4 .4L.6 7.2L5 8.8L6.2 13.4L8.6 10.2L12.4 11.8Z" fill="#555"/><path d="M16.4 .4L5 8.8L6.2 13.4L7 9.6Z" fill="#888"/></svg>
<span class="bc" style="left:34px">宗谱管理</span>
<span class="bc" style="left:87px;color:#999;font-size:11px">&gt;</span>
<span class="bc" style="left:103px">宗谱信息</span>
<div id="bigt">宗谱大数据平台</div>
<div id="add">新增</div>
<div id="card">
<span class="lb" style="left:30px;top:35px">字段名</span>
<div class="sel" style="left:87px;top:35px;width:120px">请选择<i></i></div>
<div class="inp" style="left:217px;top:35px;width:160px">请输入</div>
<span class="lb" style="left:397px;top:35px">姓氏</span>
<div class="sel" style="left:440px;top:35px;width:100px">请选择<i></i></div>
<div class="sel" style="left:550px;top:35px;width:90px">请选择<i></i></div>
<div id="qry"><svg class="abs" style="left:10px;top:11px" width="16" height="16" viewBox="0 0 16 16"><circle cx="7" cy="7" r="5.6" stroke="#fff" stroke-width="1.5" fill="none"/><path d="M11.4 11.6L14 14.4" stroke="#fff" stroke-width="1.5" stroke-linecap="round"/></svg><span class="abs" style="left:31px;top:0">查询</span></div>
<div id="exp"><svg class="abs" style="left:7px;top:6px" width="15" height="15" viewBox="0 0 15 15"><path d="M.2 9.4H12.8L13.8 14.6H1.8Z" fill="#2a2a2a"/><path d="M2.6 9.2V6.6H8.8V4.9H13.3V14" stroke="#2a2a2a" stroke-width="1" fill="none"/><path d="M4.6 6.4Q4.2 2.6 7.4 2.4" stroke="#2a2a2a" stroke-width="1.5" fill="none"/><path d="M7.2 0L10.4 2.4L7.2 4.8Z" fill="#2a2a2a"/></svg></div>
<span class="lb" style="left:33px;top:93px">谱籍地</span>
<div class="sel" style="left:90px;top:93px;width:90px">请选择<i></i></div>
<div class="sel" style="left:190px;top:93px;width:90px">请选择<i></i></div>
<div class="sel" style="left:290px;top:93px;width:90px">请选择<i></i></div>
<span class="lb" style="left:400px;top:93px">锁定</span>
<div class="sel" style="left:443px;top:93px;width:90px">全部<i></i></div>
<span class="lb" style="left:553px;top:93px">前显</span>
<div class="sel" style="left:596px;top:93px;width:90px">请选择<i></i></div>
<div id="tbl">
<div id="thd">
<div class="th" style="left:0px;width:81px">ID<span class="so" style="left:39px"><svg width="10" height="13" viewBox="0 0 10 13"><path d="M5 0L10 5.4H0Z" fill="#b2b2b2"/><path d="M5 13L10 7.6H0Z" fill="#b2b2b2"/></svg></span></div>
<div class="th" style="left:81px;width:101px">接口号<span class="so" style="left:67px"><svg width="10" height="13" viewBox="0 0 10 13"><path d="M5 0L10 5.4H0Z" fill="#b2b2b2"/><path d="M5 13L10 7.6H0Z" fill="#b2b2b2"/></svg></span></div>
<div class="th" style="left:182px;width:92px">宗谱名<span class="so" style="left:67px"><svg width="10" height="13" viewBox="0 0 10 13"><path d="M5 0L10 5.4H0Z" fill="#b2b2b2"/><path d="M5 13L10 7.6H0Z" fill="#b2b2b2"/></svg></span></div>
<div class="th" style="left:274px;width:101px">姓氏<span class="so" style="left:53px"><svg width="10" height="13" viewBox="0 0 10 13"><path d="M5 0L10 5.4H0Z" fill="#b2b2b2"/><path d="M5 13L10 7.6H0Z" fill="#b2b2b2"/></svg></span></div>
<div class="th" style="left:375px;width:92px">谱籍地<span class="so" style="left:67px"><svg width="10" height="13" viewBox="0 0 10 13"><path d="M5 0L10 5.4H0Z" fill="#b2b2b2"/><path d="M5 13L10 7.6H0Z" fill="#b2b2b2"/></svg></span></div>
<div class="th" style="left:467px;width:92px">绑定宗…</div>
<div class="th" style="left:559px;width:92px">本谱管…<span class="so" style="left:81px"><svg width="10" height="13" viewBox="0 0 10 13"><path d="M5 0L10 5.4H0Z" fill="#b2b2b2"/><path d="M5 13L10 7.6H0Z" fill="#b2b2b2"/></svg></span></div>
<div class="th" style="left:651px;width:121px">更新日期<span class="so" style="left:81px"><svg width="10" height="13" viewBox="0 0 10 13"><path d="M5 0L10 5.4H0Z" fill="#b2b2b2"/><path d="M5 13L10 7.6H0Z" fill="#b2b2b2"/></svg></span></div>
<div class="th" style="left:772px;width:223px;padding-left:0;text-align:center">操作</div>
<div class="th" style="left:995px;width:4px;padding:0;border-right:0"></div>
</div>
<div class="tr" style="top:34px">
<div class="td" style="left:0px;width:81px">143</div>
<div class="td" style="left:81px;width:101px"></div>
<div class="td" style="left:182px;width:92px">曹氏族谱</div>
<div class="td" style="left:274px;width:101px">曹</div>
<div class="td" style="left:375px;width:92px">湖南省-…</div>
<div class="td" style="left:467px;width:92px"></div>
<div class="td" style="left:559px;width:92px">185988…</div>
<div class="td" style="left:651px;width:121px">2023-11-29</div>
<div class="td" style="left:772px;width:223px;padding:0"><span class="bt g" style="left:19px;width:68px">谱管信息</span><span class="bt bl" style="left:101px;width:44px">修改</span><span class="bt o" style="left:159px;width:44px">删除</span></div>
</div>
<div class="tr" style="top:73px">
<div class="td" style="left:0px;width:81px">142</div>
<div class="td" style="left:81px;width:101px"></div>
<div class="td" style="left:182px;width:92px">郭氏宗谱</div>
<div class="td" style="left:274px;width:101px">郭</div>
<div class="td" style="left:375px;width:92px">湖北省-…</div>
<div class="td" style="left:467px;width:92px"></div>
<div class="td" style="left:559px;width:92px">134765…</div>
<div class="td" style="left:651px;width:121px">2023-11-15</div>
<div class="td" style="left:772px;width:223px;padding:0"><span class="bt g" style="left:19px;width:68px">谱管信息</span><span class="bt bl" style="left:101px;width:44px">修改</span><span class="bt o" style="left:159px;width:44px">删除</span></div>
</div>
<div class="tr" style="top:112px">
<div class="td" style="left:0px;width:81px">141</div>
<div class="td" style="left:81px;width:101px"></div>
<div class="td" style="left:182px;width:92px">黄氏宗谱</div>
<div class="td" style="left:274px;width:101px">黄</div>
<div class="td" style="left:375px;width:92px">河北省-…</div>
<div class="td" style="left:467px;width:92px"></div>
<div class="td" style="left:559px;width:92px">hbbzhg…</div>
<div class="td" style="left:651px;width:121px">2023-11-12</div>
<div class="td" style="left:772px;width:223px;padding:0"><span class="bt g" style="left:19px;width:68px">谱管信息</span><span class="bt bl" style="left:101px;width:44px">修改</span><span class="bt o" style="left:159px;width:44px">删除</span></div>
</div>
<div class="tr" style="top:151px">
<div class="td" style="left:0px;width:81px">140</div>
<div class="td" style="left:81px;width:101px"></div>
<div class="td" style="left:182px;width:92px">劉氏宗派</div>
<div class="td" style="left:274px;width:101px">刘</div>
<div class="td" style="left:375px;width:92px">河南省-…</div>
<div class="td" style="left:467px;width:92px"></div>
<div class="td" style="left:559px;width:92px">158501…</div>
<div class="td" style="left:651px;width:121px">2023-10-31</div>
<div class="td" style="left:772px;width:223px;padding:0"><span class="bt g" style="left:19px;width:68px">谱管信息</span><span class="bt bl" style="left:101px;width:44px">修改</span><span class="bt o" style="left:159px;width:44px">删除</span></div>
</div>
<div class="tr" style="top:190px;background:#f2f2f2">
<div class="td" style="left:0px;width:81px">139</div>
<div class="td" style="left:81px;width:101px"></div>
<div class="td" style="left:182px;width:92px">胡氏宗谱</div>
<div class="td" style="left:274px;width:101px">胡</div>
<div class="td" style="left:375px;width:92px">浙江省-…</div>
<div class="td" style="left:467px;width:92px"></div>
<div class="td" style="left:559px;width:92px">139068…</div>
<div class="td" style="left:651px;width:121px">2023-10-25</div>
<div class="td" style="left:772px;width:223px;padding:0"><span class="bt g" style="left:19px;width:68px">谱管信息</span><span class="bt bl" style="left:101px;width:44px">修改</span><span class="bt o" style="left:159px;width:44px">删除</span></div>
</div>
<div class="tr" style="top:229px">
<div class="td" style="left:0px;width:81px">138</div>
<div class="td" style="left:81px;width:101px"></div>
<div class="td" style="left:182px;width:92px">邹氏宗谱</div>
<div class="td" style="left:274px;width:101px">邹</div>
<div class="td" style="left:375px;width:92px">湖南省-…</div>
<div class="td" style="left:467px;width:92px"></div>
<div class="td" style="left:559px;width:92px">139866…</div>
<div class="td" style="left:651px;width:121px">2023-10-21</div>
<div class="td" style="left:772px;width:223px;padding:0"><span class="bt g" style="left:19px;width:68px">谱管信息</span><span class="bt bl" style="left:101px;width:44px">修改</span><span class="bt o" style="left:159px;width:44px">删除</span></div>
</div>
<div class="tr" style="top:268px">
<div class="td" style="left:0px;width:81px">137</div>
<div class="td" style="left:81px;width:101px"></div>
<div class="td" style="left:182px;width:92px">测试</div>
<div class="td" style="left:274px;width:101px">金</div>
<div class="td" style="left:375px;width:92px">湖北省-…</div>
<div class="td" style="left:467px;width:92px"></div>
<div class="td" style="left:559px;width:92px">jx@mw…</div>
<div class="td" style="left:651px;width:121px">2023-10-18</div>
<div class="td" style="left:772px;width:223px;padding:0"><span class="bt g" style="left:19px;width:68px">谱管信息</span><span class="bt bl" style="left:101px;width:44px">修改</span><span class="bt o" style="left:159px;width:44px">删除</span></div>
</div>
<div class="tr" style="top:307px">
<div class="td" style="left:0px;width:81px">136</div>
<div class="td" style="left:81px;width:101px"></div>
<div class="td" style="left:182px;width:92px">全国曹…</div>
<div class="td" style="left:274px;width:101px">曹</div>
<div class="td" style="left:375px;width:92px">北京市-…</div>
<div class="td" style="left:467px;width:92px"></div>
<div class="td" style="left:559px;width:92px">139866…</div>
<div class="td" style="left:651px;width:121px">2023-10-19</div>
<div class="td" style="left:772px;width:223px;padding:0"><span class="bt g" style="left:19px;width:68px">谱管信息</span><span class="bt bl" style="left:101px;width:44px">修改</span><span class="bt o" style="left:159px;width:44px">删除</span></div>
</div>
<div class="tr" style="top:346px">
<div class="td" style="left:0px;width:81px">135</div>
<div class="td" style="left:81px;width:101px"></div>
<div class="td" style="left:182px;width:92px">高隘屯…</div>
<div class="td" style="left:274px;width:101px">韦</div>
<div class="td" style="left:375px;width:92px">广西壮…</div>
<div class="td" style="left:467px;width:92px"></div>
<div class="td" style="left:559px;width:92px">189788…</div>
<div class="td" style="left:651px;width:121px">2023-10-06</div>
<div class="td" style="left:772px;width:223px;padding:0"><span class="bt g" style="left:19px;width:68px">谱管信息</span><span class="bt bl" style="left:101px;width:44px">修改</span><span class="bt o" style="left:159px;width:44px">删除</span></div>
</div>
<div class="tr" style="top:385px">
<div class="td" style="left:0px;width:81px">134</div>
<div class="td" style="left:81px;width:101px"></div>
<div class="td" style="left:182px;width:92px">测试族谱</div>
<div class="td" style="left:274px;width:101px">文</div>
<div class="td" style="left:375px;width:92px">北京市-…</div>
<div class="td" style="left:467px;width:92px"></div>
<div class="td" style="left:559px;width:92px">187184…</div>
<div class="td" style="left:651px;width:121px">2023-09-16</div>
<div class="td" style="left:772px;width:223px;padding:0"><span class="bt g" style="left:19px;width:68px">谱管信息</span><span class="bt bl" style="left:101px;width:44px">修改</span><span class="bt o" style="left:159px;width:44px">删除</span></div>
</div>
<div class="tr" style="top:424px">
<div class="td" style="left:0px;width:81px">132</div>
<div class="td" style="left:81px;width:101px"></div>
<div class="td" style="left:182px;width:92px">张氏宗谱</div>
<div class="td" style="left:274px;width:101px">张</div>
<div class="td" style="left:375px;width:92px">河南省-…</div>
<div class="td" style="left:467px;width:92px">000377…</div>
<div class="td" style="left:559px;width:92px">155276…</div>
<div class="td" style="left:651px;width:121px">2023-09-14</div>
<div class="td" style="left:772px;width:223px;padding:0"><span class="bt g" style="left:19px;width:68px">谱管信息</span><span class="bt bl" style="left:101px;width:44px">修改</span><span class="bt o" style="left:159px;width:44px">删除</span></div>
</div>
<div class="tr" style="top:463px">
<div class="td" style="left:0px;width:81px">130</div>
<div class="td" style="left:81px;width:101px"></div>
<div class="td" style="left:182px;width:92px">江苏 卢氏</div>
<div class="td" style="left:274px;width:101px">卢</div>
<div class="td" style="left:375px;width:92px">江苏省-…</div>
<div class="td" style="left:467px;width:92px"></div>
<div class="td" style="left:559px;width:92px">132851…</div>
<div class="td" style="left:651px;width:121px">2023-08-16</div>
<div class="td" style="left:772px;width:223px;padding:0"><span class="bt g" style="left:19px;width:68px">谱管信息</span><span class="bt bl" style="left:101px;width:44px">修改</span><span class="bt o" style="left:159px;width:44px">删除</span></div>
</div>
<div id="sb"></div><div id="sbt"></div>
</div>
<svg class="abs" style="left:516px;top:687px" width="10" height="15" viewBox="0 0 10 15"><path d="M8.6 .8L1.4 7.5L8.6 14.2" stroke="#c4c4c4" stroke-width="1.6" fill="none"/></svg>
<span class="pg" style="left:541px;width:30px;text-align:center;background:#cf3c2a;color:#fff;border-radius:2px;font-weight:bold">1</span>
<span class="pg" style="left:571px;width:30px;text-align:center">2</span>
<span class="pg" style="left:601px;width:30px;text-align:center">3</span>
<span class="pg" style="left:629px;width:14px;text-align:center">…</span>
<span class="pg" style="left:641px;width:30px;text-align:center">6</span>
<svg class="abs" style="left:686px;top:687px" width="10" height="15" viewBox="0 0 10 15"><path d="M1.4 .8L8.6 7.5L1.4 14.2" stroke="#2b2b2b" stroke-width="1.7" fill="none"/></svg>
<span class="pg" style="left:711px;color:#999">到第</span>
<span class="pg pgb" style="left:745px;width:40px;text-align:center;color:#999;line-height:24px">1</span>
<span class="pg" style="left:795px;color:#999">页</span>
<span class="pg pgb" style="left:817px;width:46px;text-align:center;line-height:24px;color:#1a1a1a;font-weight:500">确定</span>
<span class="pg" style="left:873px">共 107 条</span>
<span class="pg pgb" style="left:934px;width:75px;padding-left:7px;line-height:24px;font-size:12px;color:#000">20 条/页<svg class="abs" style="left:57px;top:9px" width="10" height="7" viewBox="0 0 10 7"><path d="M1 1L5 5.4L9 1" stroke="#000" stroke-width="2.2" fill="none"/></svg></span>
</div>
<div class="abs" style="left:1060px;top:-172px;width:1px;height:1002px;background:linear-gradient(180deg,rgba(95,88,84,.45) 0,rgba(95,88,84,.45) 190px,rgba(12,22,38,.45) 240px);z-index:5"></div><div class="abs" style="left:1061px;top:-172px;width:1px;height:1002px;background:linear-gradient(180deg,#5f5854 0,#5f5854 190px,#0c1626 240px);z-index:5"></div>
</div>
</body>
</html>
